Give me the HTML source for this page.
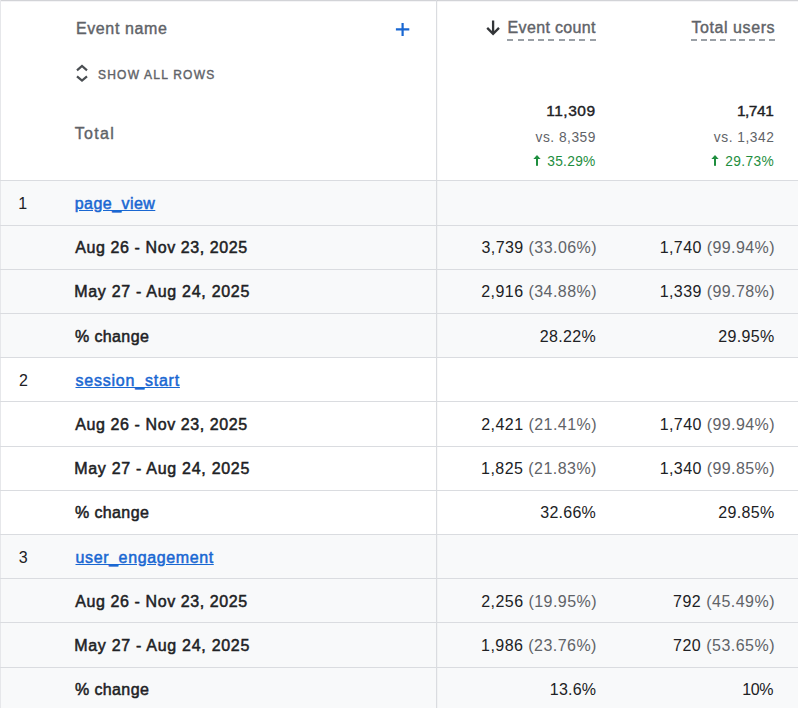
<!DOCTYPE html>
<html><head><meta charset="utf-8"><style>
html,body{margin:0;padding:0;width:798px;height:708px;overflow:hidden;background:#fff;position:relative;font-family:"Liberation Sans", sans-serif}
.t{position:absolute;white-space:nowrap;line-height:1}
</style></head><body>
<div id="deco"><div style="position:absolute;left:0;top:180px;width:798px;height:177px;background:#f8f9fa"></div><div style="position:absolute;left:0;top:534px;width:798px;height:174px;background:#f8f9fa"></div><div style="position:absolute;left:0;top:0;width:798px;height:1px;background:#d2d3d7"></div><div style="position:absolute;left:0;top:1px;width:798px;height:1px;background:#f4f4f6"></div><div style="position:absolute;left:0;top:0;width:1px;height:708px;background:#e6e7ea"></div><div style="position:absolute;left:437px;top:0;width:1px;height:708px;background:rgba(0,0,0,0.025)"></div><div style="position:absolute;left:436px;top:0;width:1px;height:708px;background:#dadce0"></div><div style="position:absolute;left:0;top:180px;width:798px;height:1px;background:#dadce0"></div><div style="position:absolute;left:0;top:225px;width:798px;height:1px;background:#dadce0"></div><div style="position:absolute;left:0;top:269px;width:798px;height:1px;background:#dadce0"></div><div style="position:absolute;left:0;top:313px;width:798px;height:1px;background:#dadce0"></div><div style="position:absolute;left:0;top:357px;width:798px;height:1px;background:#dadce0"></div><div style="position:absolute;left:0;top:401px;width:798px;height:1px;background:#dadce0"></div><div style="position:absolute;left:0;top:446px;width:798px;height:1px;background:#dadce0"></div><div style="position:absolute;left:0;top:490px;width:798px;height:1px;background:#dadce0"></div><div style="position:absolute;left:0;top:534px;width:798px;height:1px;background:#dadce0"></div><div style="position:absolute;left:0;top:578px;width:798px;height:1px;background:#dadce0"></div><div style="position:absolute;left:0;top:622px;width:798px;height:1px;background:#dadce0"></div><div style="position:absolute;left:0;top:667px;width:798px;height:1px;background:#dadce0"></div><div style="position:absolute;left:507.20px;top:39px;width:6.0px;height:2px;background:#9aa0a6"></div><div style="position:absolute;left:517.50px;top:39px;width:6.0px;height:2px;background:#9aa0a6"></div><div style="position:absolute;left:527.80px;top:39px;width:6.0px;height:2px;background:#9aa0a6"></div><div style="position:absolute;left:538.10px;top:39px;width:6.0px;height:2px;background:#9aa0a6"></div><div style="position:absolute;left:548.40px;top:39px;width:6.0px;height:2px;background:#9aa0a6"></div><div style="position:absolute;left:558.70px;top:39px;width:6.0px;height:2px;background:#9aa0a6"></div><div style="position:absolute;left:569.00px;top:39px;width:6.0px;height:2px;background:#9aa0a6"></div><div style="position:absolute;left:579.30px;top:39px;width:6.0px;height:2px;background:#9aa0a6"></div><div style="position:absolute;left:589.60px;top:39px;width:6.0px;height:2px;background:#9aa0a6"></div><div style="position:absolute;left:691.00px;top:39px;width:6.0px;height:2px;background:#9aa0a6"></div><div style="position:absolute;left:700.69px;top:39px;width:6.0px;height:2px;background:#9aa0a6"></div><div style="position:absolute;left:710.38px;top:39px;width:6.0px;height:2px;background:#9aa0a6"></div><div style="position:absolute;left:720.06px;top:39px;width:6.0px;height:2px;background:#9aa0a6"></div><div style="position:absolute;left:729.75px;top:39px;width:6.0px;height:2px;background:#9aa0a6"></div><div style="position:absolute;left:739.44px;top:39px;width:6.0px;height:2px;background:#9aa0a6"></div><div style="position:absolute;left:749.12px;top:39px;width:6.0px;height:2px;background:#9aa0a6"></div><div style="position:absolute;left:758.81px;top:39px;width:6.0px;height:2px;background:#9aa0a6"></div><div style="position:absolute;left:768.50px;top:39px;width:6.0px;height:2px;background:#9aa0a6"></div><svg style="position:absolute;left:394px;top:21px;overflow:visible" width="17" height="17" viewBox="0 0 17 17"><path d="M8.6 1.9v13M1.9 8.4h13.4" stroke="#1967d2" stroke-width="2.2" fill="none"/></svg><svg style="position:absolute;left:484px;top:18px;overflow:visible" width="18" height="18" viewBox="0 0 18 18"><path d="M9.1 2.6V15.6M3.2 9.9L9.1 15.8 15 9.9" stroke="#333538" stroke-width="2.3" fill="none" stroke-linecap="butt"/></svg><svg style="position:absolute;left:76px;top:64px;overflow:visible" width="13" height="19" viewBox="0 0 13 19"><path d="M1.0 6.3L6.0 2.0 11.0 6.3M1.0 12.3L6.0 16.6 11.0 12.3" stroke="#4a4e52" stroke-width="2.2" fill="none"/></svg><svg style="position:absolute;left:531.50px;top:154px;overflow:visible" width="10" height="13" viewBox="0 0 10 13"><path d="M1.4 5L5 1.1 8.6 5z" fill="#1e8e3e"/><rect x="4" y="4" width="2" height="7.8" fill="#1e8e3e"/></svg><svg style="position:absolute;left:709.50px;top:154px;overflow:visible" width="10" height="13" viewBox="0 0 10 13"><path d="M1.4 5L5 1.1 8.6 5z" fill="#1e8e3e"/><rect x="4" y="4" width="2" height="7.8" fill="#1e8e3e"/></svg></div>
<div id="h_eventname" class="t" style="left:75.90px;top:21.00px;font-size:16px;color:#5f6368;-webkit-text-stroke-width:0.4px;letter-spacing:0.633px;">Event name</div><div id="h_eventcount" class="t" style="right:202.08px;top:20.00px;font-size:16px;color:#5f6368;-webkit-text-stroke-width:0.4px;letter-spacing:0.350px;">Event count</div><div id="h_totalusers" class="t" style="right:22.88px;top:20.00px;font-size:16px;color:#5f6368;-webkit-text-stroke-width:0.4px;letter-spacing:0.575px;">Total users</div><div id="showall" class="t" style="left:97.96px;top:69.00px;font-size:12px;color:#5f6368;-webkit-text-stroke-width:0.4px;letter-spacing:1.225px;">SHOW ALL ROWS</div><div id="total" class="t" style="left:74.85px;top:126.00px;font-size:16px;color:#5f6368;-webkit-text-stroke-width:0.4px;letter-spacing:1.263px;">Total</div><div id="t1" class="t" style="right:202.44px;top:103.00px;font-size:15.5px;color:#202124;-webkit-text-stroke-width:0.4px;letter-spacing:0.520px;">11,309</div><div id="t2" class="t" style="right:24.73px;top:103.00px;font-size:15.5px;color:#202124;-webkit-text-stroke-width:0.4px;letter-spacing:-0.488px;">1,741</div><div id="vs1" class="t" style="right:202.10px;top:131.00px;font-size:13.75px;color:#5f6368;letter-spacing:0.506px;">vs. 8,359</div><div id="vs2" class="t" style="right:23.68px;top:131.00px;font-size:13.75px;color:#5f6368;letter-spacing:0.519px;">vs. 1,342</div><div id="g1" class="t" style="right:202.37px;top:155.00px;font-size:13.75px;color:#1e8e3e;letter-spacing:0.300px;">35.29%</div><div id="g2" class="t" style="right:23.85px;top:155.00px;font-size:13.75px;color:#1e8e3e;letter-spacing:0.370px;">29.73%</div><div id="r0_idx" class="t" style="left:18.21px;top:196.00px;font-size:16px;color:#202124;letter-spacing:0.000px;">1</div><div id="r0_link" class="t" style="left:74.75px;top:196.00px;font-size:16px;color:#1967d2;-webkit-text-stroke-width:0.5px;letter-spacing:0.450px;text-decoration:underline;">page_view</div><div id="r1_lab" class="t" style="left:75.35px;top:240.00px;font-size:16px;color:#202124;-webkit-text-stroke-width:0.5px;letter-spacing:0.583px;">Aug 26 - Nov 23, 2025</div><div id="r1_c1" class="t" style="right:200.99px;top:240.00px;font-size:16px;color:#202124;letter-spacing:0.442px;">3,739 <span style="color:#5f6368">(33.06%)</span></div><div id="r1_c2" class="t" style="right:23.11px;top:240.00px;font-size:16px;color:#202124;letter-spacing:0.412px;">1,740 <span style="color:#5f6368">(99.94%)</span></div><div id="r2_lab" class="t" style="left:74.21px;top:284.00px;font-size:16px;color:#202124;-webkit-text-stroke-width:0.5px;letter-spacing:0.707px;">May 27 - Aug 24, 2025</div><div id="r2_c1" class="t" style="right:200.96px;top:284.00px;font-size:16px;color:#202124;letter-spacing:0.462px;">2,916 <span style="color:#5f6368">(34.88%)</span></div><div id="r2_c2" class="t" style="right:23.11px;top:284.00px;font-size:16px;color:#202124;letter-spacing:0.412px;">1,339 <span style="color:#5f6368">(99.78%)</span></div><div id="r3_lab" class="t" style="left:74.96px;top:329.00px;font-size:16px;color:#202124;-webkit-text-stroke-width:0.5px;letter-spacing:0.386px;">% change</div><div id="r3_c1" class="t" style="right:201.82px;top:329.00px;font-size:16px;color:#202124;letter-spacing:0.360px;">28.22%</div><div id="r3_c2" class="t" style="right:23.50px;top:329.00px;font-size:16px;color:#202124;letter-spacing:0.340px;">29.95%</div><div id="r4_idx" class="t" style="left:19.10px;top:373.00px;font-size:16px;color:#202124;letter-spacing:0.000px;">2</div><div id="r4_link" class="t" style="left:75.50px;top:373.00px;font-size:16px;color:#1967d2;-webkit-text-stroke-width:0.5px;letter-spacing:0.779px;text-decoration:underline;">session_start</div><div id="r5_lab" class="t" style="left:75.35px;top:417.00px;font-size:16px;color:#202124;-webkit-text-stroke-width:0.5px;letter-spacing:0.583px;">Aug 26 - Nov 23, 2025</div><div id="r5_c1" class="t" style="right:200.96px;top:417.00px;font-size:16px;color:#202124;letter-spacing:0.462px;">2,421 <span style="color:#5f6368">(21.41%)</span></div><div id="r5_c2" class="t" style="right:23.11px;top:417.00px;font-size:16px;color:#202124;letter-spacing:0.412px;">1,740 <span style="color:#5f6368">(99.94%)</span></div><div id="r6_lab" class="t" style="left:74.21px;top:461.00px;font-size:16px;color:#202124;-webkit-text-stroke-width:0.5px;letter-spacing:0.707px;">May 27 - Aug 24, 2025</div><div id="r6_c1" class="t" style="right:201.13px;top:461.00px;font-size:16px;color:#202124;letter-spacing:0.458px;">1,825 <span style="color:#5f6368">(21.83%)</span></div><div id="r6_c2" class="t" style="right:23.11px;top:461.00px;font-size:16px;color:#202124;letter-spacing:0.412px;">1,340 <span style="color:#5f6368">(99.85%)</span></div><div id="r7_lab" class="t" style="left:74.96px;top:505.00px;font-size:16px;color:#202124;-webkit-text-stroke-width:0.5px;letter-spacing:0.386px;">% change</div><div id="r7_c1" class="t" style="right:201.91px;top:505.00px;font-size:16px;color:#202124;letter-spacing:0.260px;">32.66%</div><div id="r7_c2" class="t" style="right:23.50px;top:505.00px;font-size:16px;color:#202124;letter-spacing:0.340px;">29.85%</div><div id="r8_idx" class="t" style="left:18.85px;top:550.00px;font-size:16px;color:#202124;letter-spacing:0.000px;">3</div><div id="r8_link" class="t" style="left:75.50px;top:550.00px;font-size:16px;color:#1967d2;-webkit-text-stroke-width:0.5px;letter-spacing:0.618px;text-decoration:underline;">user_engagement</div><div id="r9_lab" class="t" style="left:75.35px;top:594.00px;font-size:16px;color:#202124;-webkit-text-stroke-width:0.5px;letter-spacing:0.583px;">Aug 26 - Nov 23, 2025</div><div id="r9_c1" class="t" style="right:200.96px;top:594.00px;font-size:16px;color:#202124;letter-spacing:0.462px;">2,256 <span style="color:#5f6368">(19.95%)</span></div><div id="r9_c2" class="t" style="right:22.98px;top:594.00px;font-size:16px;color:#202124;letter-spacing:0.491px;">792 <span style="color:#5f6368">(45.49%)</span></div><div id="r10_lab" class="t" style="left:74.21px;top:638.00px;font-size:16px;color:#202124;-webkit-text-stroke-width:0.5px;letter-spacing:0.707px;">May 27 - Aug 24, 2025</div><div id="r10_c1" class="t" style="right:201.13px;top:638.00px;font-size:16px;color:#202124;letter-spacing:0.458px;">1,986 <span style="color:#5f6368">(23.76%)</span></div><div id="r10_c2" class="t" style="right:22.98px;top:638.00px;font-size:16px;color:#202124;letter-spacing:0.491px;">720 <span style="color:#5f6368">(53.65%)</span></div><div id="r11_lab" class="t" style="left:74.96px;top:682.00px;font-size:16px;color:#202124;-webkit-text-stroke-width:0.5px;letter-spacing:0.386px;">% change</div><div id="r11_c1" class="t" style="right:201.74px;top:682.00px;font-size:16px;color:#202124;letter-spacing:0.225px;">13.6%</div><div id="r11_c2" class="t" style="right:24.95px;top:682.00px;font-size:16px;color:#202124;letter-spacing:-0.400px;">10%</div>
</body></html>
